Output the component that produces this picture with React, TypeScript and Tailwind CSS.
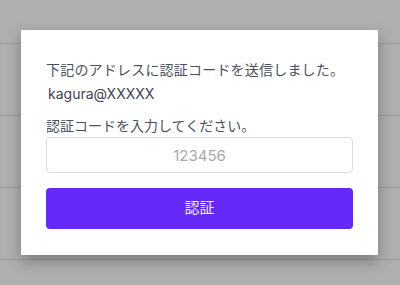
const rows = [44, 72, 72, 72, 72];

export default function App() {
  return (
    <div className="relative w-[400px] h-[285px] overflow-hidden bg-[#afafaf]" style={{ fontFamily: 'Inter, "Noto Sans CJK JP", sans-serif' }}>
      {/* table rows behind the overlay */}
      <div className="flex flex-col">
        {rows.map((h, i) => (
          <div key={i} className="border-b border-[#9c9c9c] shrink-0" style={{ height: h }} />
        ))}
      </div>

      <div className="absolute left-[21px] top-[30px] w-[357px] bg-white px-[25px] pt-[30px] pb-[26px] shadow-[0_6px_14px_rgba(0,0,0,0.3)]">
        <p className="text-[14px] leading-[20px] text-[#4b5161] tracking-[0.2px] whitespace-nowrap">
          下記のアドレスに認証コードを送信しました。
        </p>
        <p className="mt-[4px] pl-[2px] text-[14px] leading-[20px] text-[#3f4450]">kagura@XXXXX</p>
        <p className="mt-[12px] text-[14px] leading-[20px] text-[#4b5161]">認証コードを入力してください。</p>
        <input
          placeholder="123456"
          className="mt-px block w-full h-[36px] rounded-[4px] border border-[#dcdcdc] text-center text-[15px] text-[#444] placeholder:text-[#a9a9a9] outline-none"
        />
        <button className="mt-[15px] block w-full h-[41px] rounded-[4px] bg-[#6429f6] text-[15px] text-[#f0eaff]">
          認証
        </button>
      </div>
    </div>
  );
}
